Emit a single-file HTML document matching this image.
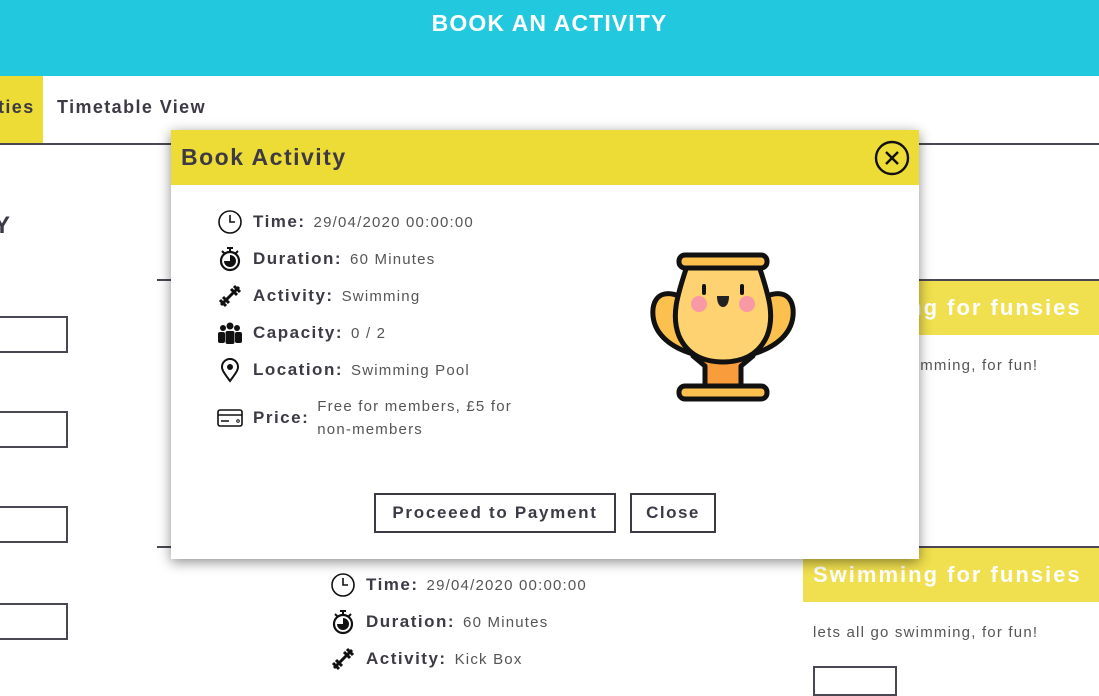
<!DOCTYPE html>
<html><head><style>
*{box-sizing:border-box;margin:0;padding:0}
body{width:1099px;height:677px;overflow:hidden;background:#fff;font-family:"Liberation Sans",sans-serif;color:#3d3a45;position:relative}
.a{position:absolute}
.b{font-weight:bold}
.lbl{font-weight:bold;font-size:17px;color:#3d3a45;letter-spacing:1.5px}
.val{font-size:15px;color:#555;letter-spacing:1.2px}
.row{position:absolute;display:flex;align-items:center;height:26px}
.row svg{width:26px;height:26px;margin-right:10px;flex:none}
.row .val{margin-left:8px}
.inp{position:absolute;left:-4px;width:72px;height:37px;border:2px solid #4a4752}
.sf{color:#fff;font-size:22px;letter-spacing:2px}
</style></head><body>
<div class="a" style="left:0;top:0;width:1099px;height:76px;background:#22c9de"></div>
<div class="a b" style="left:0;top:10px;width:1099px;text-align:center;color:#fff;font-size:23px;letter-spacing:1.1px">BOOK AN ACTIVITY</div>
<div class="a" style="left:0;top:76px;width:43px;height:67px;background:#eedc36"></div>
<div class="a b" style="left:-2px;top:97px;font-size:18px;letter-spacing:1.4px">ties</div>
<div class="a b" style="left:57px;top:97px;font-size:18px;letter-spacing:1.4px">Timetable View</div>
<div class="a" style="left:0;top:143px;width:1099px;height:2px;background:#4a4752"></div>
<div class="a b" style="left:-6px;top:212px;font-size:24px">Y</div>
<div class="inp" style="top:316px"></div>
<div class="inp" style="top:411px"></div>
<div class="inp" style="top:506px"></div>
<div class="inp" style="top:603px"></div>
<div class="a" style="left:157px;top:279px;width:942px;height:2px;background:#4a4752"></div>
<div class="a" style="left:157px;top:546px;width:942px;height:2px;background:#4a4752"></div>
<div class="a" style="left:803px;top:281px;width:296px;height:54px;background:#f0df4e"></div>
<div class="a b sf" style="left:813px;top:295px">Swimming for funsies</div>
<div class="a val" style="left:813px;top:357px">lets all go swimming, for fun!</div>
<div class="a" style="left:803px;top:548px;width:296px;height:54px;background:#f0df4e"></div>
<div class="a b sf" style="left:813px;top:562px">Swimming for funsies</div>
<div class="a val" style="left:813px;top:624px">lets all go swimming, for fun!</div>
<div class="a" style="left:813px;top:666px;width:84px;height:30px;border:2px solid #4a4752"></div>

<svg width="0" height="0" style="position:absolute"><defs>
<symbol id="clk" viewBox="0 0 26 26"><circle cx="13" cy="13" r="11" fill="none" stroke="#111" stroke-width="1.6"/><path d="M13 6v7h5" fill="none" stroke="#111" stroke-width="1.6"/></symbol>
<symbol id="sw" viewBox="0 0 26 26"><path d="M10 2h6M13 2v4M5 5l3 3M21 5l-3 3" stroke="#111" stroke-width="2"/><circle cx="13" cy="15" r="9" fill="none" stroke="#111" stroke-width="2.2"/><path d="M13 15V9a6 6 0 1 1-6 6z" fill="#111"/></symbol>
<symbol id="db" viewBox="0 0 26 26"><path d="M4 22L22 4" stroke="#111" stroke-width="3"/><path d="M3 17l6 6M6 14l6 6M14 6l6 6M17 3l6 6" stroke="#111" stroke-width="3"/></symbol>
<symbol id="pp" viewBox="0 0 26 26"><circle cx="6" cy="8" r="3" fill="#111"/><circle cx="20" cy="8" r="3" fill="#111"/><circle cx="13" cy="6" r="3.5" fill="#111"/><rect x="1" y="12" width="7" height="11" rx="2" fill="#111"/><rect x="18" y="12" width="7" height="11" rx="2" fill="#111"/><rect x="8.5" y="11" width="9" height="13" rx="2" fill="#111"/></symbol>
<symbol id="pin" viewBox="0 0 26 26"><path d="M13 24C7 16 5 13 5 10a8 8 0 0 1 16 0c0 3-2 6-8 14z" fill="none" stroke="#111" stroke-width="2"/><circle cx="13" cy="10" r="3" fill="#111"/></symbol>
<symbol id="card" viewBox="0 0 26 26"><rect x="1" y="5" width="24" height="16" rx="2" fill="none" stroke="#111" stroke-width="1.6"/><path d="M1 10h24M4 16h8" stroke="#111" stroke-width="1.6"/><circle cx="21" cy="16" r="1.3" fill="none" stroke="#111"/></symbol>
</defs></svg>

<div class="row" style="left:330px;top:572px"><svg><use href="#clk"/></svg><span class="lbl">Time:</span><span class="val">29/04/2020 00:00:00</span></div>
<div class="row" style="left:330px;top:609px"><svg><use href="#sw"/></svg><span class="lbl">Duration:</span><span class="val">60 Minutes</span></div>
<div class="row" style="left:330px;top:646px"><svg><use href="#db"/></svg><span class="lbl">Activity:</span><span class="val">Kick Box</span></div>

<div class="a" style="left:171px;top:130px;width:748px;height:429px;background:#fff;box-shadow:0 3px 12px rgba(0,0,0,.45)">
 <div class="a" style="left:0;top:0;width:748px;height:55px;background:#eedc36"></div>
 <div class="a b" style="left:10px;top:14px;font-size:23px;letter-spacing:1.5px">Book Activity</div>
 <svg class="a" style="left:703px;top:10px" width="36" height="36" viewBox="0 0 36 36"><circle cx="18" cy="18" r="16" fill="none" stroke="#111" stroke-width="2.4"/><path d="M12 12l12 12M24 12L12 24" stroke="#111" stroke-width="2.4"/></svg>
 <div class="row" style="left:46px;top:79px"><svg><use href="#clk"/></svg><span class="lbl">Time:</span><span class="val">29/04/2020 00:00:00</span></div>
 <div class="row" style="left:46px;top:116px"><svg><use href="#sw"/></svg><span class="lbl">Duration:</span><span class="val">60 Minutes</span></div>
 <div class="row" style="left:46px;top:153px"><svg><use href="#db"/></svg><span class="lbl">Activity:</span><span class="val">Swimming</span></div>
 <div class="row" style="left:46px;top:190px"><svg><use href="#pp"/></svg><span class="lbl">Capacity:</span><span class="val">0 / 2</span></div>
 <div class="row" style="left:46px;top:227px"><svg><use href="#pin"/></svg><span class="lbl">Location:</span><span class="val">Swimming Pool</span></div>
 <div class="row" style="left:46px;top:275px"><svg><use href="#card"/></svg><span class="lbl">Price:</span><span class="val" style="width:235px;line-height:23px">Free for members, £5 for non&#8209;members</span></div>
 <svg class="a" style="left:476px;top:120px" width="152" height="154" viewBox="0 0 152 154">
  <g stroke="#111" stroke-width="5" stroke-linejoin="round">
   <path d="M42 52C20 36 4 44 6 66c2 20 20 32 40 38" fill="#fcc04f"/>
   <path d="M110 52c22-16 38-8 36 14-2 20-20 32-40 38" fill="#fcc04f"/>
   <path d="M46 106h60l-12 10v20H58v-20z" fill="#f99d3c"/>
   <path d="M40 16h72c10 30 16 50 8 70-8 18-24 26-44 26s-36-8-44-26c-8-20-2-40 8-70z" fill="#fed171"/>
   <rect x="32" y="5" width="88" height="13" rx="6" fill="#fcc04f"/>
   <rect x="32" y="136" width="88" height="13" rx="6" fill="#fcc04f"/>
  </g>
  <circle cx="52" cy="54" r="8" fill="#f79aa5"/><circle cx="100" cy="54" r="8" fill="#f79aa5"/>
  <path d="M70 46h12c0 8-3 11-6 11s-6-3-6-11z" fill="#222"/>
  <path d="M57 36v7M95 36v7" stroke="#111" stroke-width="4" stroke-linecap="round"/>
 </svg>
 <div class="a b" style="left:203px;top:363px;width:242px;height:40px;border:2px solid #3d3a45;font-size:17px;text-align:center;line-height:36px;letter-spacing:1.7px">Proceeed to Payment</div>
 <div class="a b" style="left:459px;top:363px;width:86px;height:40px;border:2px solid #3d3a45;font-size:17px;text-align:center;line-height:36px;letter-spacing:1.5px">Close</div>
</div>
</body></html>
